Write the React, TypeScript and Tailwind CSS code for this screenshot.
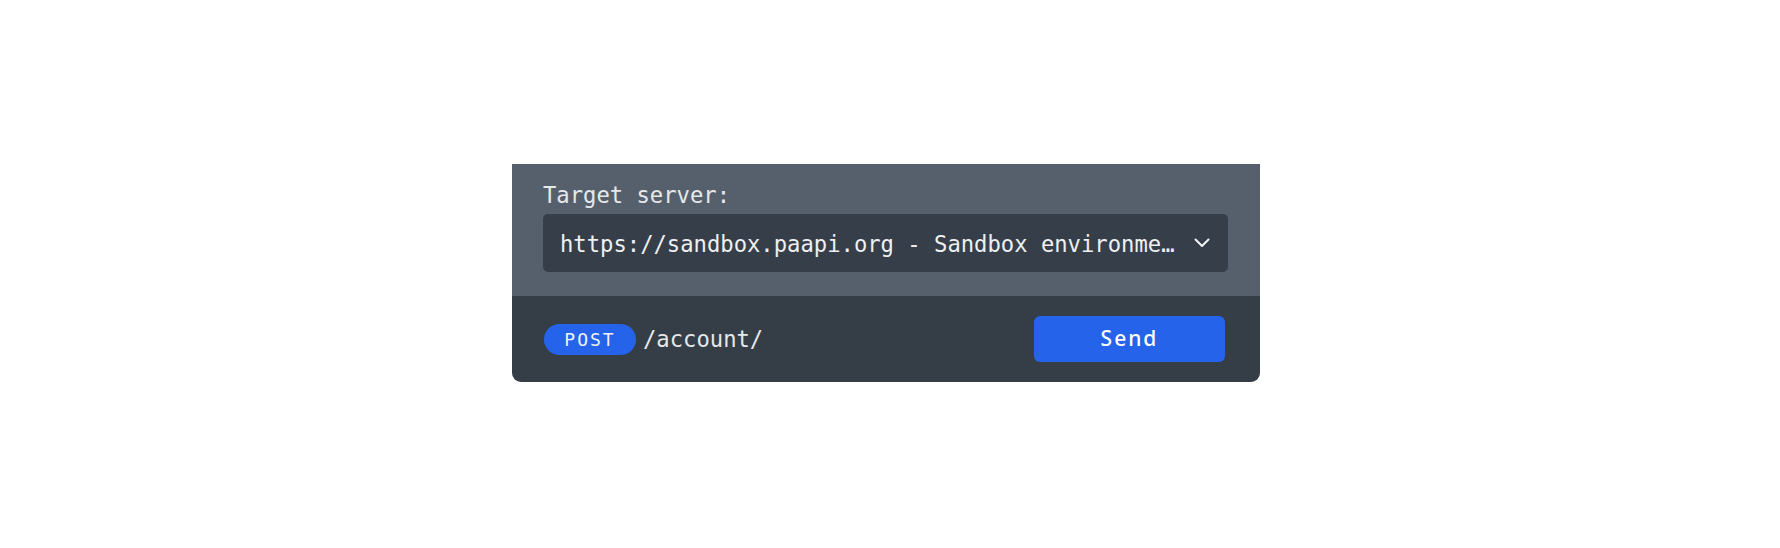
import React from "react";

const mono = { fontFamily: '"DejaVu Sans Mono", "Liberation Mono", monospace' };

export default function App() {
  return (
    <div className="w-[1780px] h-[548px] bg-white flex justify-start pl-[512px] pt-[164px]">
      <div className="w-[748px] h-[218px] flex flex-col rounded-b-[9px] overflow-hidden">
        <div className="h-[132px] bg-[#56606c] pl-[31px] pr-[32px] pt-[17px]">
          <div
            className="text-[22.2px] leading-[28px] text-[#e6e8eb]"
            style={mono}
          >
            Target server:
          </div>
          <div className="mt-[5px] h-[58px] bg-[#353e49] rounded-[5px] flex items-center pl-[17px] pr-[18px]">
            <span
              className="w-[618px] truncate text-[22.2px] leading-[28px] text-[#eef0f2] pt-[1px]"
              style={mono}
            >
              https://sandbox.paapi.org - Sandbox environment
            </span>
            <svg
              className="ml-auto"
              width="16"
              height="10"
              viewBox="0 0 16 10"
              fill="none"
            >
              <path
                d="M1.5 1.5 L8 8 L14.5 1.5"
                stroke="#f3f4f6"
                strokeWidth="2"
                strokeLinecap="round"
                strokeLinejoin="round"
              />
            </svg>
          </div>
        </div>
        <div className="h-[86px] bg-[#353d47] flex items-center pl-[32px] pr-[35px]">
          <div
            className="w-[92px] h-[31px] rounded-full bg-[#2563eb] flex items-center justify-center text-[18px] font-normal tracking-[2px] text-[#eef2fd]"
            style={mono}
          >
            POST
          </div>
          <span
            className="ml-[7px] text-[22.2px] leading-[28px] text-[#e6e8eb]"
            style={mono}
          >
            /account/
          </span>
          <button
            className="ml-auto w-[191px] h-[46px] rounded-[6px] bg-[#2563eb] text-white text-[21px] font-medium tracking-[2px] flex items-center justify-center"
            style={{ fontFamily: '"Noto Sans", "Open Sans", sans-serif' }}
          >
            Send
          </button>
        </div>
      </div>
    </div>
  );
}
